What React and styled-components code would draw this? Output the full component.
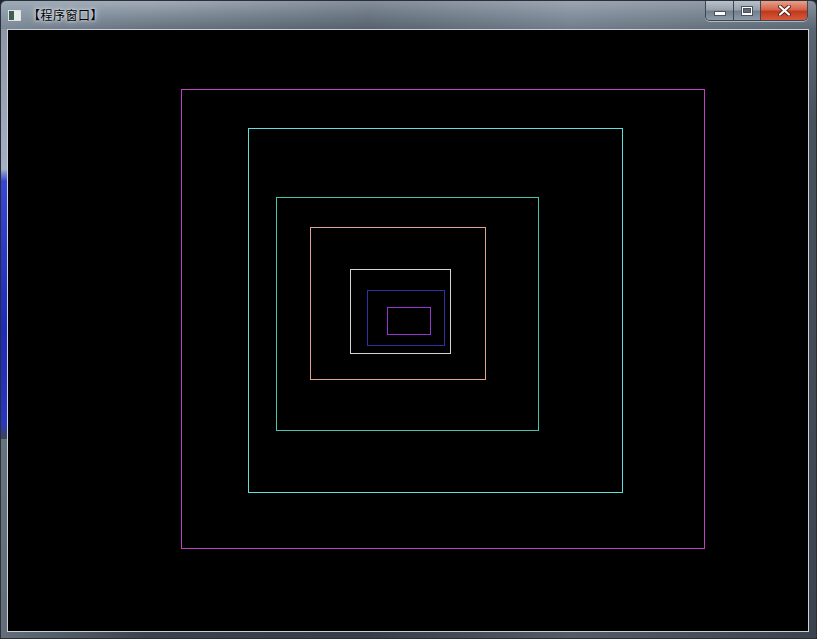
import React from 'react';
import styled, { createGlobalStyle } from 'styled-components';

const Global = createGlobalStyle`
  html, body { margin: 0; padding: 0; background: #1b2530; }
  body { font-family: "Noto Sans CJK SC", "Noto Sans", sans-serif; overflow: hidden; }
`;

const rects = [
  { x: 173, y: 59, w: 523, h: 459, c: '#c040c4' },
  { x: 240, y: 98, w: 374, h: 364, c: '#5fe0de' },
  { x: 268, y: 167, w: 262, h: 233, c: '#4cc2b2' },
  { x: 302, y: 197, w: 175, h: 152, c: '#e0a28e' },
  { x: 342, y: 239, w: 100, h: 84, c: '#d4d4d4' },
  { x: 359, y: 260, w: 77, h: 55, c: '#3030a4' },
  { x: 379, y: 277, w: 43, h: 27, c: '#9634d2' },
];

const Window = styled.div`
  width: 817px;
  height: 639px;
  display: flex;
  flex-direction: column;
  background:
    linear-gradient(90deg, rgba(150,165,180,0.45) 0%, rgba(70,80,92,0.0) 18%, rgba(40,50,62,0.25) 45%, rgba(140,150,165,0.3) 70%, rgba(60,70,82,0.25) 100%),
    linear-gradient(180deg, #a3adb9 0px, #87929f 12px, #66717e 28px, #4b5560 120px, #3a424c 639px);
  box-sizing: border-box;
  border: 1px solid #2a3038;
  border-radius: 6px 6px 0 0;
`;

const TitleBar = styled.div`
  height: 28px;
  display: flex;
  align-items: flex-start;
  padding-left: 7px;
  flex-shrink: 0;
`;

const AppIcon = styled.div`
  width: 13px;
  height: 11px;
  margin-top: 9px;
  background: linear-gradient(90deg, #3f5f55 0 45%, #e8ecea 45% 100%);
  border: 1px solid #dfe4e2;
  box-sizing: border-box;
`;

const Title = styled.div`
  margin: 6px 0 0 7px;
  font-size: 12px;
  line-height: 16px;
  color: #000;
  text-shadow: 0 0 6px #e6ecf2, 0 0 3px #f2f6fa;
  letter-spacing: 0.5px;
`;

const Controls = styled.div`
  margin-left: auto;
  margin-right: 8px;
  display: flex;
  height: 19px;
  border: 1px solid #3d4651;
  border-top: none;
  border-radius: 0 0 5px 5px;
  overflow: hidden;
  box-shadow: 0 1px 0 rgba(220,228,236,0.6);
`;

const CtlButton = styled.div`
  width: ${(p) => p.w}px;
  height: 100%;
  display: flex;
  align-items: center;
  justify-content: center;
  border-left: ${(p) => (p.first ? 'none' : '1px solid #3d4651')};
  background: ${(p) =>
    p.close
      ? 'linear-gradient(180deg, #e8a08c 0%, #d4634a 45%, #c23a1e 55%, #d6593a 100%)'
      : 'linear-gradient(180deg, #b9c2cc 0%, #97a2ae 45%, #737f8c 55%, #8e9aa8 100%)'};
`;

const MinGlyph = styled.div`
  width: 10px;
  height: 3px;
  margin-top: 6px;
  background: #fff;
  border: 1px solid #4a5260;
`;

const MaxGlyph = styled.div`
  width: 10px;
  height: 8px;
  border: 1px solid #4a5260;
  background: #fff;
  display: flex;
  align-items: center;
  justify-content: center;
  &::after {
    content: '';
    width: 6px;
    height: 3px;
    background: #5f6b78;
    border: 1px solid #4a5260;
  }
`;

const Body = styled.div`
  flex: 1;
  display: flex;
  padding: 0 8px 7px 6px;
  position: relative;
`;

const LeftEdge = styled.div`
  position: absolute;
  left: 0;
  top: 0;
  width: 6px;
  height: 410px;
  background: linear-gradient(180deg, #8d97a6 0px, #a6b0c4 140px, #3846d6 152px, #1e2ab8 300px, #2a36c0 395px, #3a4450 410px);
`;

const Client = styled.div`
  border: 1px solid #c9d1da;
  background: #000;
  width: 800px;
  height: 601px;
  position: relative;
  z-index: 1;
`;

const Canvas = styled.svg`
  display: block;
  width: 800px;
  height: 601px;
`;

function App() {
  return (
    <>
      <Global />
      <Window>
        <TitleBar>
          <AppIcon />
          <Title>【程序窗口】</Title>
          <Controls>
            <CtlButton w={27} first>
              <MinGlyph />
            </CtlButton>
            <CtlButton w={26}>
              <MaxGlyph />
            </CtlButton>
            <CtlButton w={46} close>
              <svg width="13" height="11" viewBox="0 0 13 11">
                <path d="M2 1.5 L11 9.5 M11 1.5 L2 9.5" stroke="#5a2418" strokeWidth="4" strokeLinecap="round" />
                <path d="M2 1.5 L11 9.5 M11 1.5 L2 9.5" stroke="#fff" strokeWidth="2.2" strokeLinecap="round" />
              </svg>
            </CtlButton>
          </Controls>
        </TitleBar>
        <Body>
          <LeftEdge />
          <Client>
            <Canvas viewBox="0 0 800 601">
              {rects.map((r, i) => (
                <rect
                  key={i}
                  x={r.x + 0.5}
                  y={r.y + 0.5}
                  width={r.w}
                  height={r.h}
                  fill="none"
                  stroke={r.c}
                  strokeWidth="1"
                  shapeRendering="crispEdges"
                />
              ))}
            </Canvas>
          </Client>
        </Body>
      </Window>
    </>
  );
}

export default App;
